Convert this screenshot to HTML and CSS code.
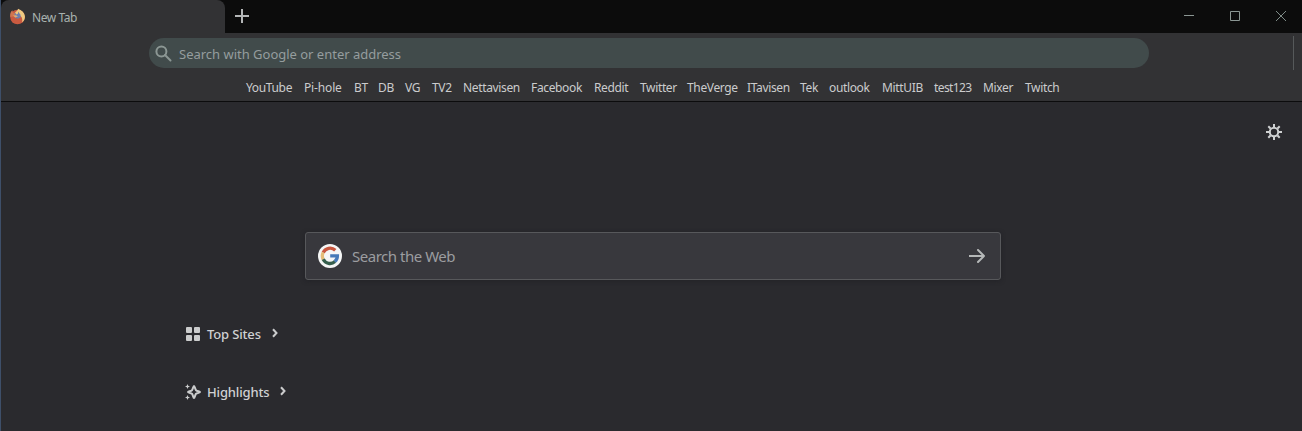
FILE: index.html
```html
<!DOCTYPE html>
<html lang="en">
<head>
<meta charset="utf-8">
<title>New Tab</title>
<link rel="stylesheet" href="styles.css">
</head>
<body>
<div class="window">
  <header class="titlebar">
    <div class="tab">
      <svg class="fox" width="17" height="17" viewBox="0 0 17 17">
        <circle cx="8.500" cy="9" r="7.300" fill="#c95a40"/>
        <path d="M9 .8C12.500 2 15.300 4.500 15.900 8c.3 3-.9 5-2.900 6.200.6-2 .3-3.700-.5-5.200L8 5z" fill="#efc980"/>
        <path d="M1.300 9C.7 6 1.700 3.700 3.300 2.200L4 4.700l2.500.2L7 8z" fill="#d07650"/>
        <path d="M5.500 5.500 9 3.500l2.500 3.200.2 2.500-2.700 1.500-3-1z" fill="#6e80ad"/>
        <path d="M6 4.500 9 2v3.500l-1.500 1z" fill="#efc980"/>
        <path d="M4 7.500 7 7.300l2 1.200-2.800 1z" fill="#e3ad72"/>
      </svg>
      <span class="tab-label">New Tab</span>
    </div>
    <svg class="plus" width="14" height="14" viewBox="0 0 14 14"><path d="M7 0v14M0 7h14" stroke="#b4b6b7" stroke-width="2"/></svg>
    <div class="controls">
      <svg width="10" height="10" viewBox="0 0 10 10"><path d="M0 4.500h10" stroke="#8b9693"/></svg>
      <svg width="10" height="10" viewBox="0 0 10 10"><path d="M.5.5h9v9h-9z" fill="none" stroke="#8b9693"/></svg>
      <svg width="10" height="10" viewBox="0 0 10 10"><path d="M0 0l10 10M10 0L0 10" stroke="#7f8c88"/></svg>
    </div>
  </header>
  <div class="toolbar">
    <div class="address-row">
      <div class="address">
        <svg width="17" height="17" viewBox="0 0 17 17"><g fill="none" stroke="#8c9794" stroke-width="2"><circle cx="6.400" cy="6.400" r="5"/><path d="M10 10l5.500 5.500" stroke-linecap="round"/></g></svg>
        <span class="address-text">Search with Google or enter address</span>
      </div>
      <div class="divider"></div>
    </div>
    <nav class="bookmarks">
      <a>YouTube</a><a class="loose">Pi-hole</a><a>BT</a><a>DB</a><a>VG</a><a>TV2</a><a>Nettavisen</a><a>Facebook</a><a>Reddit</a><a>Twitter</a><a>TheVerge</a><a>ITavisen</a><a>Tek</a><a>outlook</a><a>MittUIB</a><a class="tight">test123</a><a>Mixer</a><a>Twitch</a>
    </nav>
  </div>
  <main class="page">
    <svg class="gear" width="16" height="16" viewBox="0 0 16 16"><g fill="none" stroke="#cfd1d2"><circle cx="8" cy="8" r="4.200" stroke-width="2"/><path d="M8 0v3M8 13v3M0 8h3M13 8h3M2.300 2.300l2.200 2.200M11.500 11.500l2.200 2.200M2.300 13.700l2.200-2.200M11.500 4.500l2.200-2.200" stroke-width="2"/></g></svg>
    <div class="search">
      <svg width="24" height="24" viewBox="0 0 24 24">
        <circle cx="12" cy="12" r="12" fill="#f5f6f6"/>
        <g fill="none" stroke-width="3.300">
          <path d="M5.200 8.700A7.500 7.500 0 0 1 17.300 6.300" stroke="#c8573f"/>
          <path d="M5.200 15.400A7.500 7.500 0 0 1 5.200 8.600" stroke="#e4bd78"/>
          <path d="M17 17.500A7.500 7.500 0 0 1 5.200 15.300" stroke="#355e4c"/>
          <path d="M12.200 11.900h7.200A7.500 7.500 0 0 1 16.800 17.500" stroke="#4679b8"/>
        </g>
      </svg>
      <span class="search-text">Search the Web</span>
      <svg class="go" width="16" height="14" viewBox="0 0 16 14"><path d="M0 7h15M9 1l6 6-6 6" fill="none" stroke="#b5b8b8" stroke-width="2" stroke-linecap="round" stroke-linejoin="round"/></svg>
    </div>
    <div class="section">
      <svg width="16" height="16" viewBox="0 0 16 16" fill="#cbcccd"><rect x="1" y="1" width="6" height="6" rx="1"/><rect x="9" y="1" width="6" height="6" rx="1"/><rect x="1" y="9" width="6" height="6" rx="1"/><rect x="9" y="9" width="6" height="6" rx="1"/></svg>
      <span class="section-title top-title">Top Sites</span>
      <svg class="chevron" width="6" height="10" viewBox="0 0 6 10"><path d="M1 1.200l3.500 3.800L1 8.800" fill="none" stroke="#cbcccd" stroke-width="2"/></svg>
    </div>
    <div class="section">
      <svg width="16" height="16" viewBox="0 0 16 16"><path d="M9 2c.8 0 1 3.200 2 4.200s4 1.200 4 1.800-3 .8-4 1.800S9.800 14 9 14s-1-3.200-2-4.200S3 8.600 3 8s3-.8 4-1.800S8.200 2 9 2z" fill="none" stroke="#cbcccd" stroke-width="2"/><path d="M2.500 0l.7 1.800 1.800.7-1.800.7-.7 1.800-.7-1.800L0 2.500l1.800-.7zM2.500 11l.7 1.800 1.800.7-1.800.7-.7 1.800-.7-1.800-1.800-.7 1.800-.7z" fill="#cbcccd"/></svg>
      <span class="section-title high-title">Highlights</span>
      <svg class="chevron" width="6" height="10" viewBox="0 0 6 10"><path d="M1 1.200l3.500 3.800L1 8.800" fill="none" stroke="#cbcccd" stroke-width="2"/></svg>
    </div>
  </main>
</div>
</body>
</html>
```
FILE: styles.css
```css
* { box-sizing: border-box; }
body { margin: 0; background: #2a2a2e; font-family: "Noto Sans", "Open Sans", sans-serif; }
svg { display: block; flex: none; }
span, a { white-space: nowrap; }
.window { width: 1302px; height: 431px; border-left: 1px solid #3e4f69; overflow: hidden; }
.titlebar { display: flex; height: 33px; background: #0c0c0c; }
.tab { display: flex; align-items: center; width: 224px; height: 33px; padding-left: 8px; border-radius: 8px 8px 0 0; background: #323234; }
.tab-label { margin: 2px 0 0 6px; font-size: 12px; letter-spacing: -0.45px; color: #a9b2af; }
.plus { margin: 9px 0 0 10px; }
.controls { display: flex; gap: 36px; margin: 11px 16px 0 auto; }
.toolbar { height: 69px; background: #323234; border-bottom: 1px solid #0c0c0d; }
.address-row { display: flex; height: 42px; padding-left: 148px; }
.address { display: flex; align-items: center; width: 1000px; height: 30px; margin-top: 5px; padding-left: 6px; border-radius: 15px; background: #414b4b; }
.address-text { margin: 2px 0 0 7px; font-size: 13px; letter-spacing: -0.01px; color: #959d9e; }
.divider { width: 1px; height: 34px; margin: 3px 8px 0 auto; background: #56595a; }
.bookmarks { display: grid; grid-template-columns: 58px 50px 24px 27px 27px 31px 68px 63px 46px 47px 60px 53px 29px 53px 52px 49px 42px 40px; padding-left: 245px; font-size: 12px; line-height: 26px; letter-spacing: -0.35px; color: #cbcccd; }
.bookmarks .loose { letter-spacing: -0.15px; }
.bookmarks .tight { letter-spacing: -0.6px; }
.page { display: flex; flex-direction: column; height: 329px; }
.gear { align-self: flex-end; margin: 22px 20px 0 0; }
.search { display: flex; align-items: center; flex: none; width: 696px; height: 48px; margin: 92px 0 0 304px; padding: 0 15px 0 12px; border: 1px solid #57585b; border-radius: 3px; background: #38383d; box-shadow: 0 1px 4px #222226; }
.search-text { margin-left: 10px; font-size: 15px; letter-spacing: -0.48px; color: #9c9da0; }
.go { margin-left: auto; }
.section { display: flex; align-items: center; flex: none; height: 20px; margin: 44px 0 0 184px; }
.section + .section { margin-top: 38px; }
.section-title { margin-left: 6px; font-size: 13px; font-weight: 500; letter-spacing: -0.15px; color: #d0d1d3; }
.top-title { width: 65px; }
.high-title { width: 73px; }
.chevron { margin-bottom: 2px; }
```
